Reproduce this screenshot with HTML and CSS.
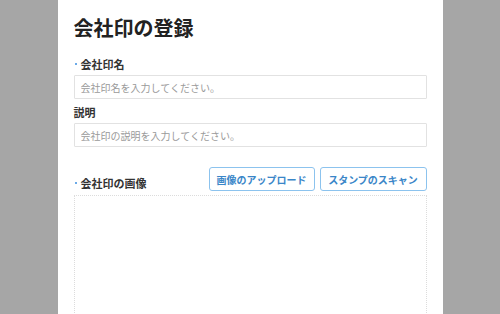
FILE: index.html
```html
<!DOCTYPE html>
<html lang="ja">
<head>
    <meta charset="UTF-8">
    <meta name="viewport" content="width=device-width, initial-scale=1.0">
    <title>会社印の登録</title>
    <link rel="stylesheet" href="styles.css">
</head>
<body>
    <div class="panel">
        <h1 class="title">会社印の登録</h1>

        <div class="field">
            <label class="label required" for="sealName">会社印名</label>
            <input type="text" id="sealName" class="text-input" placeholder="会社印名を入力してください。">
        </div>

        <div class="field">
            <label class="label" for="sealDesc">説明</label>
            <input type="text" id="sealDesc" class="text-input" placeholder="会社印の説明を入力してください。">
        </div>

        <div class="image-field">
            <div class="image-head">
                <span class="label required">会社印の画像</span>
                <div class="actions">
                    <button class="btn">画像のアップロード</button>
                    <button class="btn">スタンプのスキャン</button>
                </div>
            </div>
            <div class="image-box"></div>
        </div>
    </div>
</body>
</html>
```

FILE: styles.css
```css
body {
    margin: 0;
    padding: 0;
    background-color: #a6a6a6;
    font-family: "Noto Sans CJK JP", "Noto Sans", sans-serif;
    color: #222;
    overflow: hidden;
}

.panel {
    width: 353px;
    min-height: 100vh;
    margin: 0 auto;
    padding: 13px 16px 0;
    background-color: #fff;
}

.title {
    margin: 0 0 13px;
    font-size: 20px;
    line-height: 30px;
    font-weight: bold;
}

.field {
    display: flex;
    flex-direction: column;
    margin-bottom: 5px;
}

.label {
    position: relative;
    display: block;
    font-size: 11px;
    line-height: 16px;
    font-weight: bold;
    color: #333;
    margin-bottom: 3px;
}

.required {
    padding-left: 7px;
}

.required::before {
    content: "";
    position: absolute;
    left: 1px;
    top: 7px;
    width: 2px;
    height: 2px;
    border-radius: 50%;
    background-color: #3a8ee0;
}

.text-input {
    box-sizing: border-box;
    width: 100%;
    height: 24px;
    padding: 0 6px;
    border: 1px solid #e2e2e2;
    border-radius: 1px;
    font-family: inherit;
    font-size: 10px;
    color: #333;
    outline: none;
}

.text-input::placeholder {
    color: #9a9a9a;
}

.image-field {
    margin-top: 20px;
}

.image-head {
    display: flex;
    justify-content: space-between;
    align-items: flex-end;
    margin-bottom: 4px;
}

.image-head .label {
    margin-bottom: 0;
}

.actions {
    display: flex;
    gap: 5px;
}

.btn {
    box-sizing: border-box;
    height: 24px;
    width: 106px;
    padding: 0;
    border: 1px solid #8cc3ee;
    border-radius: 3px;
    background-color: #fff;
    color: #3a86c8;
    font-family: inherit;
    font-size: 10px;
    font-weight: bold;
    cursor: pointer;
}

.btn:last-child {
    width: 107px;
}

.image-box {
    box-sizing: border-box;
    height: 200px;
    border: 1px dotted #dcdcdc;
}
```
